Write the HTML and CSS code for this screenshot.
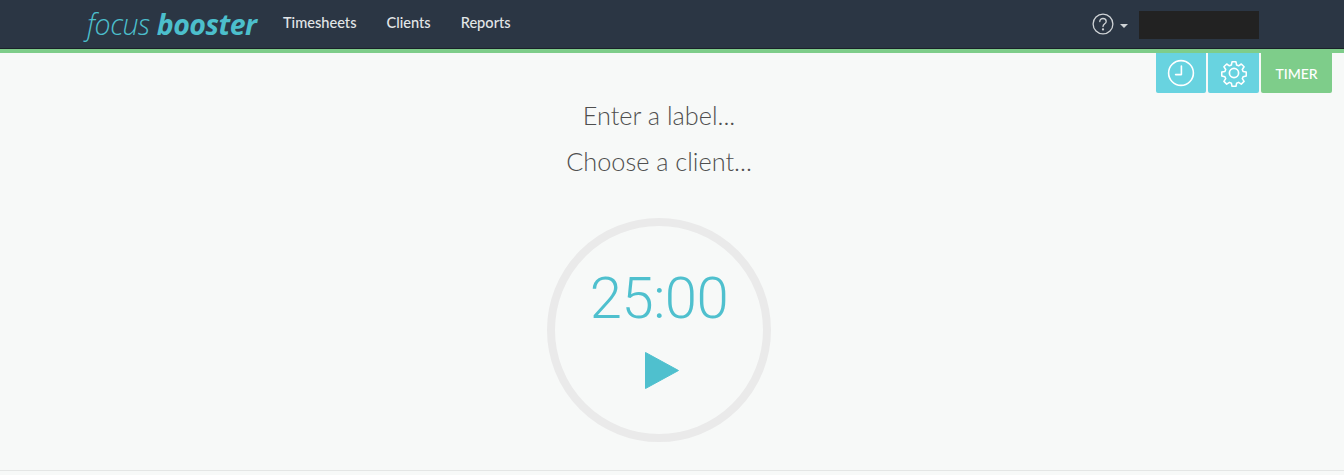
FILE: index.html
```html
<!DOCTYPE html>
<html lang="en">

<head>
    <meta charset="UTF-8">
    <title>focus booster</title>
    <link rel="stylesheet" href="styles.css">
</head>

<body>
    <header class="topbar">
        <a class="logo"><span class="logo-light">focus</span> <span class="logo-bold">booster</span></a>
        <nav class="nav">
            <a>Timesheets</a>
            <a>Clients</a>
            <a>Reports</a>
        </nav>
        <div class="account">
            <svg class="help" width="22" height="22" viewBox="0 0 22 22" fill="none" stroke="#cfd3d6" stroke-width="1.3" stroke-linecap="round">
                <circle cx="11" cy="11" r="9.9" />
                <path d="M7.8 8.6c0-1.9 1.4-3.1 3.2-3.1s3.2 1.2 3.2 2.9c0 2.4-3.2 2.5-3.2 5.2" />
                <circle cx="11" cy="16.4" r=".5" fill="#cfd3d6" />
            </svg>
            <span class="caret"></span>
            <div class="user-box"></div>
        </div>
    </header>

    <main class="page">
        <div class="tabs">
            <a class="tab tab-clock">
                <svg width="28" height="28" viewBox="0 0 28 28" fill="none" stroke="#fff" stroke-width="1.6" stroke-linecap="round" stroke-linejoin="round">
                    <circle cx="14" cy="14" r="12.4" />
                    <path d="M14.4 7v8.6H8.6" />
                </svg>
            </a>
            <a class="tab tab-gear">
                <svg width="28" height="28" viewBox="0 0 28 28" fill="none" stroke="#fff" stroke-width="1.7" stroke-linejoin="round">
                    <circle cx="14" cy="14" r="4.600" />
                    <path d="M11.8 1.600h4.400l.7 3.500 2.200.9 3-2 3.100 3.100-2 3 .9 2.200 3.500.7v4.400l-3.500.7-.9 2.200 2 3-3.100 3.100-3-2-2.200.9-.7 3.500h-4.400l-.7-3.500-2.200-.9-3 2-3.100-3.100 2-3-.9-2.200-3.500-.7v-4.400l3.500-.7.9-2.200-2-3 3.100-3.100 3 2 2.200-.9z" transform="translate(1.400 1.400) scale(.9)" />
                </svg>
            </a>
            <a class="tab tab-timer">TIMER</a>
        </div>

        <div class="fields">
            <p class="field">Enter a label...</p>
            <p class="field">Choose a client...</p>
        </div>

        <div class="dial">
            <div class="time">25:00</div>
            <svg class="play" width="34" height="37" viewBox="0 0 34 37">
                <path d="M.5.500 33.500 18.500.500 36.500z" fill="#4fc0ce" stroke="#4fc0ce" stroke-linejoin="round" />
            </svg>
        </div>
    </main>
</body>

</html>
```

FILE: styles.css
```css
* {
    margin: 0px;
    padding: 0px;
    box-sizing: border-box;
}

body {
    background-color: #f7f9f8;
    font-family: Lato, "Open Sans", sans-serif;
    height: 475px;
    overflow: hidden;
}

.topbar {
    display: flex;
    align-items: center;
    height: 53px;
    padding: 0 85px 2px 87px;
    background-color: #2b3644;
    border-bottom: 4px solid #7ecd8a;
    box-shadow: inset 0 -1px 0 #1b2129;
}

.logo {
    font-family: "Open Sans", sans-serif;
    font-size: 28.500px;
    font-style: italic;
    color: #4cbfcc;
    letter-spacing: -0.5px;
    white-space: nowrap;
    width: 196px;
}

.logo-light {
    font-weight: 300;
}

.logo-bold {
    font-weight: 700;
}

.nav {
    display: flex;
    gap: 30px;
    padding-bottom: 2px;
}

.nav a {
    color: #e3e6e8;
    font-size: 14.600px;
    font-weight: 500;
}

.account {
    display: flex;
    align-items: center;
    margin-left: auto;
}

.caret {
    width: 0;
    height: 0;
    margin-left: 6px;
    margin-top: 5px;
    border-left: 4px solid transparent;
    border-right: 4px solid transparent;
    border-top: 4px solid #cfd3d6;
}

.user-box {
    width: 120px;
    height: 28px;
    margin-left: 11px;
    margin-top: 2px;
    background-color: #222222;
}

.page {
    display: flex;
    flex-direction: column;
    align-items: center;
    height: 418px;
    padding-right: 26px;
    border-bottom: 1px solid #e4e6e5;
    position: relative;
}

.tabs {
    position: absolute;
    top: 0;
    right: 12px;
    display: flex;
    gap: 2px;
}

.tab {
    display: flex;
    align-items: center;
    justify-content: center;
    height: 40px;
    width: 50px;
    border-radius: 0 0 2px 2px;
    background-color: #68d3e0;
}

.tab-gear {
    width: 51px;
}

.tab-timer {
    width: 71px;
    background-color: #7ecd8a;
    color: #fff;
    font-size: 14px;
    font-weight: 500;
}

.fields {
    padding-top: 46px;
}

.field {
    font-size: 25.300px;
    font-weight: 300;
    line-height: 32px;
    margin-bottom: 14px;
    text-align: center;
    color: #4f4f4f;
}

.dial {
    display: flex;
    flex-direction: column;
    align-items: center;
    width: 224px;
    height: 224px;
    margin-top: 27px;
    padding-top: 36px;
    border: 8px solid #eaeaea;
    border-radius: 50%;
}

.time {
    font-family: Roboto, sans-serif;
    font-size: 58px;
    font-weight: 300;
    line-height: 72px;
    letter-spacing: -0.500px;
    color: #4fc0ce;
}

.play {
    margin-top: 18px;
    margin-left: 6px;
}
```
